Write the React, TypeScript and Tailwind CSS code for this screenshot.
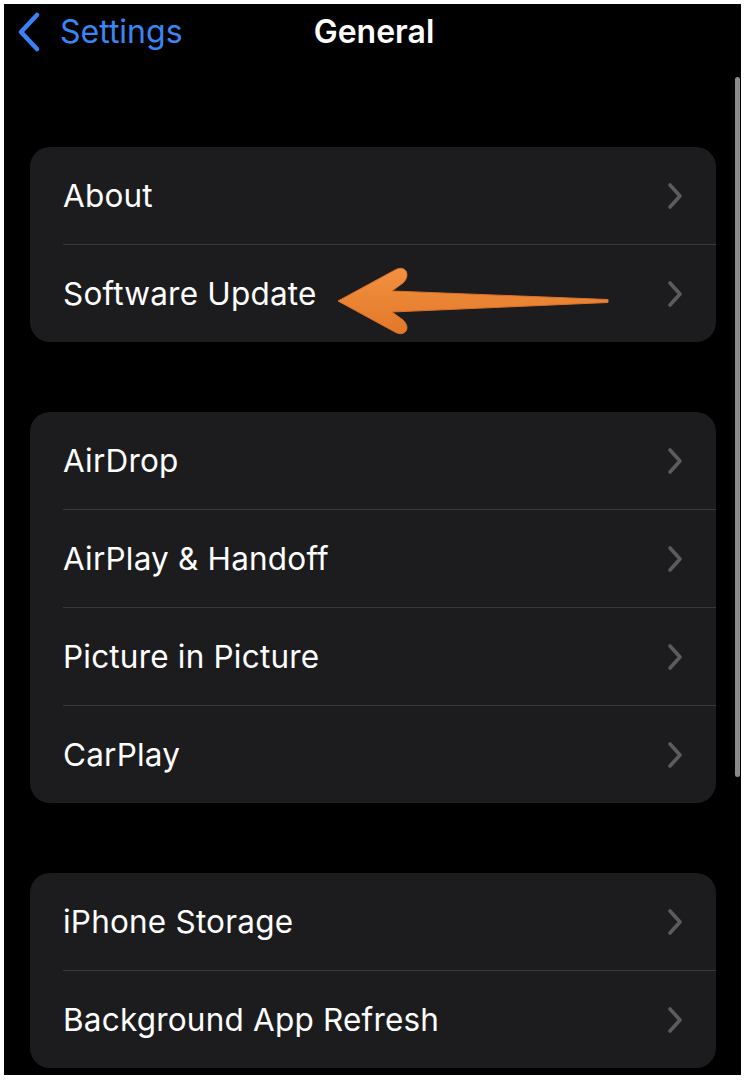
const GROUPS = [
  ['About', 'Software Update'],
  ['AirDrop', 'AirPlay & Handoff', 'Picture in Picture', 'CarPlay'],
  ['iPhone Storage', 'Background App Refresh'],
];

function Chevron() {
  return (
    <svg width="16" height="28" viewBox="0 0 16 28" fill="none" className="shrink-0">
      <path
        d="M3 3 L13 14 L3 25"
        stroke="#5c5c60"
        strokeWidth="3.6"
        strokeLinecap="round"
        strokeLinejoin="round"
      />
    </svg>
  );
}

function Row({ label, last }: { label: string; last: boolean }) {
  return (
    <div className="pl-[33px]">
      <div
        className={
          'flex items-center justify-between pr-[33px] ' +
          (last ? 'h-[97px]' : 'h-[98px] border-b border-[#38383a]')
        }
      >
        <span className="text-[31.5px] tracking-[0.2px] text-white">{label}</span>
        <Chevron />
      </div>
    </div>
  );
}

function Arrow() {
  return (
    <svg
      className="pointer-events-none absolute left-[326px] top-[258px]"
      width="292"
      height="84"
      viewBox="326 258 292 84"
    >
      <defs>
        <linearGradient id="orange" x1="0" y1="0" x2="0" y2="1">
          <stop offset="0" stopColor="#f39140" />
          <stop offset="1" stopColor="#e2772a" />
        </linearGradient>
      </defs>
      <path
        d="M338 301 L395 270 Q402 266 406 271 Q409 277 403 283 L392 291 L608 299.5 L608 302.5 L392 312 L403 320 Q409 326 406 331 Q402 336 395 332 Z"
        fill="url(#orange)"
        stroke="#d9722a"
        strokeWidth="1"
        strokeLinejoin="round"
      />
    </svg>
  );
}

export default function App() {
  return (
    <div className="min-h-screen bg-white pl-[4px] pt-[4px]" style={{ fontFamily: 'Inter, "Noto Sans", sans-serif' }}>
      <div className="relative h-[1071px] w-[737px] overflow-hidden bg-black">
        <header className="relative flex h-[56px] items-center">
          <div className="flex items-center pl-[10px]">
            <svg width="28" height="42" viewBox="0 0 28 42" fill="none">
              <path
                d="M23 4 L7 21 L23 38"
                stroke="#3b82f6"
                strokeWidth="4.6"
                strokeLinecap="round"
                strokeLinejoin="round"
              />
            </svg>
            <span className="ml-[18px] text-[32px] text-[#3a86f5]">Settings</span>
          </div>
          <h1 className="absolute left-0 right-0 text-center text-[32px] font-semibold text-white">
            <span className="ml-[3px]">General</span>
          </h1>
        </header>

        <main className="mt-[87px] flex flex-col gap-[70px] pl-[26px] pr-[25px]">
          {GROUPS.map((group, i) => (
            <section key={i} className="overflow-hidden rounded-[20px] bg-[#1c1c1e]">
              {group.map((label, j) => (
                <Row key={label} label={label} last={j === group.length - 1} />
              ))}
            </section>
          ))}
        </main>

        <div className="absolute right-[1px] top-[73px] h-[700px] w-[5px] rounded-full bg-[#8a8a8c]" />
      </div>
      <Arrow />
    </div>
  );
}
